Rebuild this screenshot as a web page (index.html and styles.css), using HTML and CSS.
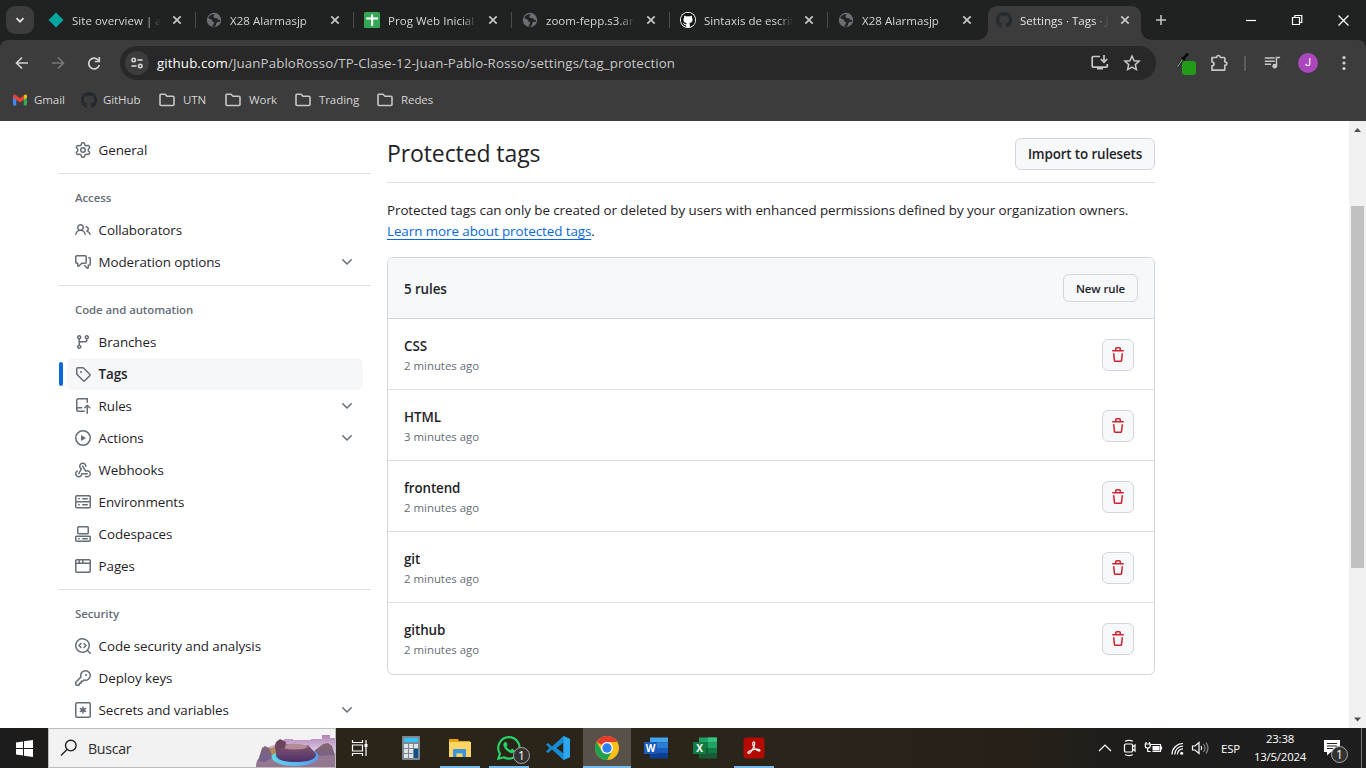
FILE: index.html
```html
<!DOCTYPE html>
<html lang="en">
<head>
<meta charset="utf-8">
<title>Settings · Tags</title>
<link rel="stylesheet" href="styles.css">
</head>
<body>
<svg class="defs" aria-hidden="true">
<symbol id="gear" viewBox="0 0 16 16"><path d="M8 0a8.2 8.2 0 0 1 .701.031C9.444.095 9.99.645 10.16 1.29l.288 1.107c.018.066.079.158.212.224.231.114.454.243.668.386.123.082.233.09.299.071l1.103-.303c.644-.176 1.392.021 1.82.63.27.385.506.792.704 1.218.315.675.111 1.422-.364 1.891l-.814.806c-.049.048-.098.147-.088.294.016.257.016.515 0 .772-.01.147.038.246.088.294l.814.806c.475.469.679 1.216.364 1.891a7.977 7.977 0 0 1-.704 1.217c-.428.61-1.176.807-1.82.63l-1.102-.302c-.067-.019-.177-.011-.3.071a5.909 5.909 0 0 1-.668.386c-.133.066-.194.158-.211.224l-.29 1.106c-.168.646-.715 1.196-1.458 1.26a8.006 8.006 0 0 1-1.402 0c-.743-.064-1.289-.614-1.458-1.26l-.289-1.106c-.018-.066-.079-.158-.212-.224a5.738 5.738 0 0 1-.668-.386c-.123-.082-.233-.09-.299-.071l-1.103.303c-.644.176-1.392-.021-1.82-.63a8.12 8.12 0 0 1-.704-1.218c-.315-.675-.111-1.422.363-1.891l.815-.806c.05-.048.098-.147.088-.294a6.214 6.214 0 0 1 0-.772c.01-.147-.038-.246-.088-.294l-.815-.806C.635 6.045.431 5.298.746 4.623a7.92 7.92 0 0 1 .704-1.217c.428-.61 1.176-.807 1.82-.63l1.102.302c.067.019.177.011.3-.071.214-.143.437-.272.668-.386.133-.066.194-.158.211-.224l.29-1.106C6.009.645 6.556.095 7.299.03 7.53.01 7.764 0 8 0Zm-.571 1.525c-.036.003-.108.036-.137.146l-.289 1.105c-.147.561-.549.967-.998 1.189-.173.086-.34.183-.5.29-.417.278-.97.423-1.529.27l-1.103-.303c-.109-.03-.175.016-.195.045-.22.312-.412.644-.573.99-.014.031-.021.11.059.19l.815.806c.411.406.562.957.53 1.456a4.709 4.709 0 0 0 0 .582c.032.499-.119 1.05-.53 1.456l-.815.806c-.081.08-.073.159-.059.19.162.346.353.677.573.989.02.03.085.076.195.046l1.102-.303c.56-.153 1.113-.008 1.53.27.161.107.328.204.501.29.447.222.85.629.997 1.189l.289 1.105c.029.109.101.143.137.146a6.6 6.6 0 0 0 1.142 0c.036-.003.108-.036.137-.146l.289-1.105c.147-.561.549-.967.998-1.189.173-.086.34-.183.5-.29.417-.278.97-.423 1.529-.27l1.103.303c.109.029.175-.016.195-.045.22-.313.411-.644.573-.99.014-.031.021-.11-.059-.19l-.815-.806c-.411-.406-.562-.957-.53-1.456a4.709 4.709 0 0 0 0-.582c-.032-.499.119-1.05.53-1.456l.815-.806c.081-.08.073-.159.059-.19a6.464 6.464 0 0 0-.573-.989c-.02-.03-.085-.076-.195-.046l-1.102.303c-.56.153-1.113.008-1.53-.27a4.44 4.44 0 0 0-.501-.29c-.447-.222-.85-.629-.997-1.189l-.289-1.105c-.029-.11-.101-.143-.137-.146a6.6 6.6 0 0 0-1.142 0ZM11 8a3 3 0 1 1-6 0 3 3 0 0 1 6 0ZM9.5 8a1.5 1.5 0 1 0-3.001.001A1.5 1.5 0 0 0 9.5 8Z"/></symbol>
<symbol id="people" viewBox="0 0 16 16"><path d="M2 5.5a3.5 3.5 0 1 1 5.898 2.549 5.508 5.508 0 0 1 3.034 4.084.75.75 0 1 1-1.482.235 4 4 0 0 0-7.9 0 .75.75 0 0 1-1.482-.236A5.507 5.507 0 0 1 3.102 8.05 3.493 3.493 0 0 1 2 5.5ZM11 4a3.001 3.001 0 0 1 2.22 5.018 5.01 5.01 0 0 1 2.56 3.012.749.749 0 0 1-.885.954.752.752 0 0 1-.549-.514 3.507 3.507 0 0 0-2.522-2.372.75.75 0 0 1-.574-.73v-.352a.75.75 0 0 1 .416-.672A1.5 1.5 0 0 0 11 5.5.75.75 0 0 1 11 4Zm-5.5-.5a2 2 0 1 0-.001 3.999A2 2 0 0 0 5.5 3.5Z"/></symbol>
<symbol id="discussion" viewBox="0 0 16 16"><path d="M1.75 1h8.5c.966 0 1.75.784 1.75 1.75v5.5A1.75 1.75 0 0 1 10.25 10H7.061l-2.574 2.573A1.458 1.458 0 0 1 2 11.543V10h-.25A1.75 1.75 0 0 1 0 8.25v-5.5C0 1.784.784 1 1.75 1ZM1.5 2.75v5.5c0 .138.112.25.25.25h1a.75.75 0 0 1 .75.75v2.19l2.72-2.72a.749.749 0 0 1 .53-.22h3.5a.25.25 0 0 0 .25-.25v-5.5a.25.25 0 0 0-.25-.25h-8.5a.25.25 0 0 0-.25.25Zm13 2a.25.25 0 0 0-.25-.25h-.5a.75.75 0 0 1 0-1.5h.5c.966 0 1.75.784 1.75 1.75v5.5A1.75 1.75 0 0 1 14.25 12H14v1.543a1.458 1.458 0 0 1-2.487 1.03L9.22 12.28a.749.749 0 0 1 .326-1.275.749.749 0 0 1 .734.215l2.22 2.22v-2.19a.75.75 0 0 1 .75-.75h1a.25.25 0 0 0 .25-.25Z"/></symbol>
<symbol id="branch" viewBox="0 0 16 16"><path d="M9.5 3.25a2.25 2.25 0 1 1 3 2.122V6A2.5 2.5 0 0 1 10 8.5H6a1 1 0 0 0-1 1v1.128a2.251 2.251 0 1 1-1.5 0V5.372a2.25 2.25 0 1 1 1.5 0v1.836A2.493 2.493 0 0 1 6 7h4a1 1 0 0 0 1-1v-.628A2.25 2.25 0 0 1 9.5 3.25Zm-6 0a.75.75 0 1 0 1.5 0 .75.75 0 0 0-1.5 0Zm8.25-.75a.75.75 0 1 0 0 1.5.75.75 0 0 0 0-1.5ZM4.25 12a.75.75 0 1 0 0 1.5.75.75 0 0 0 0-1.5Z"/></symbol>
<symbol id="tag" viewBox="0 0 16 16"><path d="M1 7.775V2.75C1 1.784 1.784 1 2.75 1h5.025c.464 0 .91.184 1.238.513l6.25 6.25a1.75 1.75 0 0 1 0 2.474l-5.026 5.026a1.75 1.75 0 0 1-2.474 0l-6.25-6.25A1.752 1.752 0 0 1 1 7.775Zm1.5 0c0 .066.026.13.073.177l6.25 6.25a.25.25 0 0 0 .354 0l5.025-5.025a.25.25 0 0 0 0-.354l-6.25-6.25a.25.25 0 0 0-.177-.073H2.75a.25.25 0 0 0-.25.25ZM6 5a1 1 0 1 1 0 2 1 1 0 0 1 0-2Z"/></symbol>
<symbol id="repopush" viewBox="0 0 16 16"><path d="M1 2.5A2.5 2.5 0 0 1 3.5 0h8.75a.75.75 0 0 1 .75.75v3.5a.75.75 0 0 1-1.5 0V1.5h-8a1 1 0 0 0-1 1v6.708A2.493 2.493 0 0 1 3.5 9h3.25a.75.75 0 0 1 0 1.5H3.5a1 1 0 0 0 0 2h5.75a.75.75 0 0 1 0 1.5H3.5A2.5 2.5 0 0 1 1 11.5Zm13.23 7.79-1.225-1.224v6.184a.75.75 0 0 1-1.5 0V9.066L10.28 10.29a.75.75 0 0 1-1.06-1.061l2.505-2.504a.75.75 0 0 1 1.06 0L15.29 9.23a.751.751 0 0 1-.018 1.042.751.751 0 0 1-1.042.018Z"/></symbol>
<symbol id="play" viewBox="0 0 16 16"><path d="M8 0a8 8 0 1 1 0 16A8 8 0 0 1 8 0ZM1.5 8a6.5 6.5 0 1 0 13 0 6.5 6.5 0 0 0-13 0Zm4.879-2.773 4.264 2.559a.25.25 0 0 1 0 .428l-4.264 2.559A.25.25 0 0 1 6 10.559V5.442a.25.25 0 0 1 .379-.215Z"/></symbol>
<symbol id="webhook" viewBox="0 0 16 16"><path d="M5.5 4.25a2.25 2.25 0 0 1 4.5 0 .75.75 0 0 0 1.5 0 3.75 3.75 0 1 0-6.14 2.889l-2.272 4.258a.75.75 0 0 0 1.324.706L7 7.25a.75.75 0 0 0-.309-1.015A2.25 2.25 0 0 1 5.5 4.25Z"/><path d="M7.364 3.607a.75.75 0 0 1 1.03.257l2.608 4.349a3.75 3.75 0 1 1-.628 6.785.75.75 0 0 1 .752-1.299 2.25 2.25 0 1 0-.033-3.88.75.75 0 0 1-1.03-.256L7.107 4.636a.75.75 0 0 1 .257-1.03Z"/><path d="M2.9 8.776A.75.75 0 0 1 2.625 9.8 2.25 2.25 0 1 0 6 11.75a.75.75 0 0 1 .75-.751h5.5a.75.75 0 0 1 0 1.5H7.425a3.751 3.751 0 1 1-5.55-3.998.75.75 0 0 1 1.024.274Z"/></symbol>
<symbol id="server" viewBox="0 0 16 16"><path d="M1.75 1h12.5c.966 0 1.75.784 1.75 1.75v4c0 .372-.116.717-.314 1 .198.283.314.628.314 1v4a1.75 1.75 0 0 1-1.75 1.75H1.75A1.75 1.75 0 0 1 0 12.75v-4c0-.358.109-.707.314-1a1.739 1.739 0 0 1-.314-1v-4C0 1.784.784 1 1.75 1ZM1.5 2.75v4c0 .138.112.25.25.25h12.5a.25.25 0 0 0 .25-.25v-4a.25.25 0 0 0-.25-.25H1.75a.25.25 0 0 0-.25.25Zm.25 5.75a.25.25 0 0 0-.25.25v4c0 .138.112.25.25.25h12.5a.25.25 0 0 0 .25-.25v-4a.25.25 0 0 0-.25-.25ZM7 4.75A.75.75 0 0 1 7.75 4h4.5a.75.75 0 0 1 0 1.5h-4.5A.75.75 0 0 1 7 4.75ZM7.75 10h4.5a.75.75 0 0 1 0 1.5h-4.5a.75.75 0 0 1 0-1.5ZM3 4.75A.75.75 0 0 1 3.75 4h.5a.75.75 0 0 1 0 1.5h-.5A.75.75 0 0 1 3 4.75ZM3.75 10h.5a.75.75 0 0 1 0 1.5h-.5a.75.75 0 0 1 0-1.5Z"/></symbol>
<symbol id="codespaces" viewBox="0 0 16 16"><path d="M0 11.25c0-.966.784-1.75 1.75-1.75h12.5c.966 0 1.75.784 1.75 1.75v3A1.75 1.75 0 0 1 14.25 16H1.75A1.75 1.75 0 0 1 0 14.25Zm2-9.5C2 .784 2.784 0 3.75 0h8.5C13.216 0 14 .784 14 1.75v5a1.75 1.75 0 0 1-1.75 1.75h-8.5A1.75 1.75 0 0 1 2 6.75Zm1.75-.25a.25.25 0 0 0-.25.25v5c0 .138.112.25.25.25h8.5a.25.25 0 0 0 .25-.25v-5a.25.25 0 0 0-.25-.25Zm-2 9.5a.25.25 0 0 0-.25.25v3c0 .138.112.25.25.25h12.5a.25.25 0 0 0 .25-.25v-3a.25.25 0 0 0-.25-.25Z"/><path d="M7 12.75a.75.75 0 0 1 .75-.75h4.5a.75.75 0 0 1 0 1.5h-4.5a.75.75 0 0 1-.75-.75Zm-4 0a.75.75 0 0 1 .75-.75h.5a.75.75 0 0 1 0 1.5h-.5a.75.75 0 0 1-.75-.75Z"/></symbol>
<symbol id="browser" viewBox="0 0 16 16"><path d="M0 2.75C0 1.784.784 1 1.75 1h12.5c.966 0 1.75.784 1.75 1.75v10.5A1.75 1.75 0 0 1 14.25 15H1.75A1.75 1.75 0 0 1 0 13.25ZM14.5 6h-13v7.25c0 .138.112.25.25.25h12.5a.25.25 0 0 0 .25-.25Zm-6-3.5v2h6V2.75a.25.25 0 0 0-.25-.25ZM5 2.5v2h2v-2Zm-3.25 0a.25.25 0 0 0-.25.25V4.5h2v-2Z"/></symbol>
<symbol id="codescan" viewBox="0 0 16 16"><path d="M8.47 4.97a.75.75 0 0 0 0 1.06L9.94 7.5 8.47 8.97a.75.75 0 1 0 1.06 1.06l2-2a.75.75 0 0 0 0-1.06l-2-2a.75.75 0 0 0-1.06 0ZM6.53 6.03a.75.75 0 0 0-1.06-1.06l-2 2a.75.75 0 0 0 0 1.06l2 2a.75.75 0 1 0 1.06-1.06L5.06 7.5l1.47-1.47Z"/><path d="M12.246 13.307a7.5 7.5 0 1 1 1.06-1.06l2.474 2.473a.75.75 0 1 1-1.06 1.06l-2.474-2.473ZM1.5 7.5a6.002 6.002 0 0 0 3.608 5.504 6.002 6.002 0 0 0 6.486-1.117.748.748 0 0 1 .292-.293A6 6 0 1 0 1.5 7.5Z"/></symbol>
<symbol id="key" viewBox="0 0 16 16"><path d="M10.5 0a5.499 5.499 0 1 1-1.288 10.848l-.932.932a.749.749 0 0 1-.53.22H7v.75a.749.749 0 0 1-.22.53l-.5.5a.749.749 0 0 1-.53.22H5v.75a.749.749 0 0 1-.22.53l-.5.5a.749.749 0 0 1-.53.22h-2A1.75 1.75 0 0 1 0 14.25v-2c0-.199.079-.389.22-.53l4.932-4.932A5.5 5.5 0 0 1 10.5 0Zm-4 5.5c-.001.431.069.86.205 1.269a.75.75 0 0 1-.181.768L1.5 12.56v1.69c0 .138.112.25.25.25h1.69l.06-.06v-1.19a.75.75 0 0 1 .75-.75h1.19l.06-.06v-1.19a.75.75 0 0 1 .75-.75h1.19l1.023-1.025a.75.75 0 0 1 .768-.18A4 4 0 1 0 6.5 5.5ZM11 6a1 1 0 1 1 0-2 1 1 0 0 1 0 2Z"/></symbol>
<symbol id="secret" viewBox="0 0 16 16"><g fill="none" stroke="currentColor" stroke-width="1.5" stroke-linecap="round"><rect x=".75" y=".75" width="14.5" height="14.5" rx="1.2"/><path d="M8 5v6M5.4 6.5l5.2 3M5.4 9.5l5.2-3"/></g></symbol>
<symbol id="trash" viewBox="0 0 16 16"><path d="M11 1.75V3h2.25a.75.75 0 0 1 0 1.5H2.75a.75.75 0 0 1 0-1.5H5V1.75C5 .784 5.784 0 6.75 0h2.5C10.216 0 11 .784 11 1.75ZM4.496 6.675l.66 6.6a.25.25 0 0 0 .249.225h5.19a.25.25 0 0 0 .249-.225l.66-6.6a.75.75 0 0 1 1.492.149l-.66 6.6A1.748 1.748 0 0 1 10.595 15h-5.19a1.75 1.75 0 0 1-1.741-1.575l-.66-6.6a.75.75 0 1 1 1.492-.15ZM6.5 1.75V3h3V1.75a.25.25 0 0 0-.25-.25h-2.5a.25.25 0 0 0-.25.25Z"/></symbol>
<symbol id="chevron" viewBox="0 0 16 16"><path d="M12.78 5.22a.749.749 0 0 1 0 1.06l-4.25 4.25a.749.749 0 0 1-1.06 0L3.22 6.28a.749.749 0 1 1 1.06-1.06L8 8.939l3.72-3.719a.749.749 0 0 1 1.06 0Z"/></symbol>
<symbol id="octocat" viewBox="0 0 16 16"><path d="M8 0C3.58 0 0 3.58 0 8c0 3.54 2.29 6.53 5.47 7.59.4.07.55-.17.55-.38 0-.19-.01-.82-.01-1.49-2.01.37-2.53-.49-2.69-.94-.09-.23-.48-.94-.82-1.13-.28-.15-.68-.52-.01-.53.63-.01 1.08.58 1.23.82.72 1.21 1.87.87 2.33.66.07-.52.28-.87.51-1.07-1.78-.2-3.64-.89-3.64-3.95 0-.87.31-1.59.82-2.15-.08-.2-.36-1.02.08-2.12 0 0 .67-.21 2.2.82.64-.18 1.32-.27 2-.27s1.36.09 2 .27c1.53-1.04 2.2-.82 2.2-.82.44 1.1.16 1.92.08 2.12.51.56.82 1.27.82 2.15 0 3.07-1.87 3.75-3.65 3.95.29.25.54.73.54 1.48 0 1.07-.01 1.93-.01 2.2 0 .21.15.46.55.38A8.01 8.01 0 0 0 16 8c0-4.42-3.58-8-8-8Z"/></symbol>
<symbol id="close" viewBox="0 0 16 16"><path d="M4.3 4.3l7.4 7.4M11.7 4.3l-7.4 7.4" stroke="currentColor" stroke-width="1.7"/></symbol>
<symbol id="globe" viewBox="0 0 16 16"><circle cx="8" cy="8" r="7.2" fill="#6c7076"/><path d="M8.600 2.300 7.200 4.600l1.200 1.300 2.600.3 1 1.500 2 .3-.4 2-2.200-.3-1.200 1.800-.6 2.600-1.800.8-1.200-.4.200-2.200-1.300-1.100.2-1.600L3 8.200l-.9-1 .8-2.600Q5.500 1.800 8.600 2.300Z" fill="#212423"/><path d="M1.300 6.600c2-.2 3.900.2 4.700 1.600l.4 1.400 1.700.6-.4 2-1.800.8-.8-1.600-2.600-.6Q1.300 8.700 1.300 6.600Z" fill="#6c7076"/></symbol>
<symbol id="folder" viewBox="0 0 18 16"><path d="M2 3.2q0-1 1-1h4l2 2h6q1 0 1 1v7.3q0 1-1 1H3q-1 0-1-1Z" fill="none" stroke="#c7c7c7" stroke-width="1.6"/></symbol>
</svg>

<header class="browser">
  <div class="tabstrip">
    <div class="tabsearch"><svg width="12" height="12" viewBox="0 0 12 12"><path d="M2.5 4.2 6 7.7l3.500-3.500" fill="none" stroke="#e3e3e3" stroke-width="1.800"/></svg></div>
    <div class="tab"><svg class="fav" viewBox="0 0 16 16"><path d="M8 .5 15.500 8 8 15.500.5 8Z" fill="#05a5a0"/></svg><span class="tt">Site overview | aed</span><svg class="x"><use href="#close"/></svg></div>
    <div class="tab"><svg class="fav"><use href="#globe"/></svg><span class="tt">X28 Alarmasjp</span><svg class="x"><use href="#close"/></svg></div>
    <div class="tab"><svg class="fav" viewBox="0 0 16 16"><rect width="16" height="16" rx="1.500" fill="#34a853"/><path d="M7 2.500h2.200v3H14v2H9.200v6.300H7V7.500H2.200v-2H7Z" fill="#fff"/></svg><span class="tt">Prog Web Inicial</span><svg class="x"><use href="#close"/></svg></div>
    <div class="tab"><svg class="fav"><use href="#globe"/></svg><span class="tt">zoom-fepp.s3.ama</span><svg class="x"><use href="#close"/></svg></div>
    <div class="tab"><svg class="fav" viewBox="0 0 16 16"><circle cx="8" cy="8" r="8" fill="#fff"/><svg class="ink" x=".8" y=".8" width="14.400" height="14.400"><use href="#octocat"/></svg></svg><span class="tt">Sintaxis de escritu</span><svg class="x"><use href="#close"/></svg></div>
    <div class="tab nodiv"><svg class="fav"><use href="#globe"/></svg><span class="tt">X28 Alarmasjp</span><svg class="x"><use href="#close"/></svg></div>
    <div class="tab active"><svg class="fav oct"><use href="#octocat"/></svg><span class="tt">Settings · Tags · Ju</span><svg class="x"><use href="#close"/></svg></div>
    <svg class="plus" viewBox="0 0 12 12"><path d="M6 1v10M1 6h10" stroke="#c7c7c7" stroke-width="1.500"/></svg>
    <svg class="wins" viewBox="0 0 110 20"><g fill="none" stroke="#fff" stroke-width="1.200"><path d="M3 10.500h10"/><path d="M49.500 7.500h7v7h-7ZM51.800 7.500v-2h7v7h-2"/><path d="m95.500 5.500 10 10M105.500 5.500l-10 10"/></g></svg>
  </div>
  <div class="toolbar">
    <svg class="navs" viewBox="0 0 100 20"><g fill="none" stroke="#d0d0d0" stroke-width="1.700"><path d="M18 10H7M12 4.500 6.500 10l5.500 5.500"/><path stroke="#777" d="M42 10h11M48 4.500 53.500 10 48 15.500"/><path d="M88.400 7.200A5.400 5.400 0 1 0 89.300 12M89.300 4v4.500h-4.500"/></g></svg>
    <div class="omnibox">
      <span class="site"><svg width="14" height="14" viewBox="0 0 14 14"><g fill="none" stroke="#d5d5d5" stroke-width="1.600"><circle cx="3.700" cy="4" r="1.700"/><path d="M7.500 4h5"/><circle cx="10.300" cy="10" r="1.700"/><path d="M1.500 10h5"/></g></svg></span>
      <span class="url"><b>github.com</b>/JuanPabloRosso/TP-Clase-12-Juan-Pablo-Rosso/settings/tag_protection</span>
      <svg class="install" viewBox="0 0 20 20"><g fill="none" stroke="#c7c7c7" stroke-width="1.700"><path d="M10 3.500H3q-.8 0-.8.800v9q0 .8.800.8h13.500q.8 0 .8-.8v-2.300"/><path d="M14 2v7M10.800 6l3.200 3.200L17.200 6"/></g><path d="M7 14h6v2.500H7Z" fill="#c7c7c7"/></svg>
      <svg class="star" viewBox="0 0 20 20"><path d="m10 3 2.100 4.700 5 .5-3.800 3.400 1.100 5L10 14l-4.400 2.600 1.100-5L2.900 8.200l5-.5Z" fill="none" stroke="#c7c7c7" stroke-width="1.500"/></svg>
    </div>
    <svg class="ext" viewBox="0 0 26 28"><path d="m4.500 18.500 5-7.500" stroke="#222" stroke-width="2.400"/><path d="m4.500 18 5-7.500" stroke="#8db59a" stroke-width="1"/><path d="m8 8.500 3-1 1.500-2.500 3-1.200-.2 3-2.600 1.700-1 3.200-1.700-.8Z" fill="#080808"/><rect x="9" y="12" width="14" height="14" rx="3" fill="#229b16"/></svg>
    <svg class="puzzle" viewBox="0 0 20 20"><path d="M3 4.500h4.500q.3-2 2-2t2 2H15q.8 0 .8.800v3.500q2 .200 2 1.800t-2 1.800v4q0 .800-.800.800H3v-4.300q2-.200 2-2T3 9Z" fill="none" stroke="#c7c7c7" stroke-width="1.700" stroke-linejoin="round"/></svg>
    <i class="sep"></i>
    <svg class="music" viewBox="0 0 20 20"><path d="M2 4.500h11M2 8h11M2 11.500h7M15 13.500V4h4" fill="none" stroke="#c7c7c7" stroke-width="1.700"/><circle cx="13" cy="13.500" r="2.600" fill="#c7c7c7"/></svg>
    <span class="avatar">J</span>
    <svg class="dots" viewBox="0 0 4 16"><g fill="#d0d0d0"><circle cx="2" cy="2.500" r="1.600"/><circle cx="2" cy="8" r="1.600"/><circle cx="2" cy="13.500" r="1.600"/></g></svg>
  </div>
  <div class="bookmarks">
    <span class="bm gm"><svg width="14" height="12" viewBox="0 0 14 12"><path d="M0 2.500v8q0 .9.900.9h2.400V5Z" fill="#4285f4"/><path d="M14 2.500v8q0 .9-.9.9h-2.400V5Z" fill="#34a853"/><path d="M10.700 1.500v4.200L14 3.200V2q-.4-2-2.200-1.300Z" fill="#fbbc04"/><path d="M0 3.200V2Q.4 0 2.200.7L7 4.300 10.700 1.500v4.200L7 8.400 3.300 5.700Z" fill="#ea4335"/></svg>Gmail</span>
    <span class="bm gh"><svg class="oct" width="16" height="16"><use href="#octocat"/></svg>GitHub</span>
    <span class="bm f1"><svg width="18" height="16"><use href="#folder"/></svg>UTN</span>
    <span class="bm f2"><svg width="18" height="16"><use href="#folder"/></svg>Work</span>
    <span class="bm f3"><svg width="18" height="16"><use href="#folder"/></svg>Trading</span>
    <span class="bm f4"><svg width="18" height="16"><use href="#folder"/></svg>Redes</span>
  </div>
</header>

<div class="viewport">
  <nav class="side">
    <a class="item"><svg><use href="#gear"/></svg>General</a>
    <hr>
    <h3>Access</h3>
    <a class="item"><svg><use href="#people"/></svg>Collaborators</a>
    <a class="item"><svg><use href="#discussion"/></svg>Moderation options<svg class="chev"><use href="#chevron"/></svg></a>
    <hr>
    <h3>Code and automation</h3>
    <a class="item"><svg><use href="#branch"/></svg>Branches</a>
    <a class="item current"><svg><use href="#tag"/></svg>Tags</a>
    <a class="item"><svg><use href="#repopush"/></svg>Rules<svg class="chev"><use href="#chevron"/></svg></a>
    <a class="item"><svg><use href="#play"/></svg>Actions<svg class="chev"><use href="#chevron"/></svg></a>
    <a class="item"><svg><use href="#webhook"/></svg>Webhooks</a>
    <a class="item"><svg><use href="#server"/></svg>Environments</a>
    <a class="item"><svg><use href="#codespaces"/></svg>Codespaces</a>
    <a class="item"><svg><use href="#browser"/></svg>Pages</a>
    <hr>
    <h3>Security</h3>
    <a class="item"><svg><use href="#codescan"/></svg>Code security and analysis</a>
    <a class="item"><svg><use href="#key"/></svg>Deploy keys</a>
    <a class="item"><svg><use href="#secret"/></svg>Secrets and variables<svg class="chev"><use href="#chevron"/></svg></a>
  </nav>
  <main class="main">
    <div class="head"><h1>Protected tags</h1><button class="btn">Import to rulesets</button></div>
    <p class="desc">Protected tags can only be created or deleted by users with enhanced permissions defined by your organization owners.<br><a class="link">Learn more about protected tags</a>.</p>
    <section class="box">
      <div class="boxhead"><strong>5 rules</strong><button class="btn sm">New rule</button></div>
      <div class="row"><div><strong>CSS</strong><small>2 minutes ago</small></div><button class="del"><svg><use href="#trash"/></svg></button></div>
      <div class="row"><div><strong>HTML</strong><small>3 minutes ago</small></div><button class="del"><svg><use href="#trash"/></svg></button></div>
      <div class="row"><div><strong>frontend</strong><small>2 minutes ago</small></div><button class="del"><svg><use href="#trash"/></svg></button></div>
      <div class="row"><div><strong>git</strong><small>2 minutes ago</small></div><button class="del"><svg><use href="#trash"/></svg></button></div>
      <div class="row"><div><strong>github</strong><small>2 minutes ago</small></div><button class="del"><svg><use href="#trash"/></svg></button></div>
    </section>
  </main>
  <div class="scroll"><svg viewBox="0 0 17 17"><path d="M5 11h7L8.500 7Z" fill="#505050"/></svg><i></i><svg viewBox="0 0 17 17"><path d="M5 6.500h7l-3.500 4Z" fill="#505050"/></svg></div>
</div>

<footer class="taskbar">
  <div class="start"><svg width="17" height="17" viewBox="0 0 17 17"><path d="M0 2.400 7 1.400v6.700H0ZM8 1.300 17 0v8.100H8ZM0 9h7v6.600l-7-1ZM8 9h9v8l-9-1.300Z" fill="#fff"/></svg></div>
  <div class="search">
    <svg class="mag" viewBox="0 0 18 18"><circle cx="10.800" cy="6.600" r="5.300" fill="none" stroke="#222" stroke-width="1.400"/><path d="m7 10.400-6 6" stroke="#222" stroke-width="1.400"/></svg>
    <span>Buscar</span>
    <svg class="art" viewBox="0 0 79 32">
      <defs><linearGradient id="ga" x1="0" y1="0" x2="0" y2="1"><stop offset="0" stop-color="#b083b2"/><stop offset=".5" stop-color="#dccbea"/><stop offset="1" stop-color="#b79bd0"/></linearGradient><linearGradient id="gb" x1="0" y1="0" x2="0" y2="1"><stop offset="0" stop-color="#86596c"/><stop offset="1" stop-color="#4c2f6b"/></linearGradient><linearGradient id="gc"><stop offset="0" stop-color="#5fd7ee"/><stop offset="1" stop-color="#5a9cf0"/></linearGradient><linearGradient id="gd" x1="0" y1="0" x2="0" y2="1"><stop offset="0" stop-color="#8a6669"/><stop offset="1" stop-color="#6d6296"/></linearGradient></defs>
      <path d="M12 12 20 9l9-5h8v1h18V4h11V0h8v3h5v29H12Z" fill="url(#ga)"/>
      <path d="M0 32q0-8 4-9l34-5 26-1 15 3v12Z" fill="#957890"/>
      <path d="M2 26 6 13l3-2 10 5 1 5-12 6ZM58 16l9-7 5-1 4 3 3 9-17 1Z" fill="url(#gd)"/>
      <ellipse cx="39" cy="21.500" rx="23.500" ry="9.500" fill="url(#gc)"/>
      <path d="M24 11 31 9q12 4 21 1l8 9q0 8-21 8-18 0-19-7Z" fill="url(#gb)"/>
      <path d="M26 11q12-5 26 0-1 3.500-13 3.500T26 11Z" fill="#b78a98"/>
      <path d="m18 14 2-7 4-3 6 3-1 6-5 1-3 5-2-1Z" fill="#6b4560"/><path d="m13 13 6-1 1 6-4 2Z" fill="#b58a60"/>
    </svg>
  </div>
  <div class="task"><svg width="18" height="18" viewBox="0 0 18 18"><g fill="none" stroke="#fff" stroke-width="1.200"><path d="M1.500 1v2.500h10V1M1.500 17v-2.500h10V17M1.500 6h10v6h-10ZM15 1v16"/></g><path d="M13.500 5h3v3h-3Z" fill="#fff"/></svg></div>
  <div class="apps">
    <div class="app"><svg viewBox="0 0 24 24"><rect x="3" width="18" height="24" rx="1" fill="#7b8791"/><rect x="5" y="2" width="14" height="4" fill="#35c1f1"/><g fill="#dfe3e6"><path d="M5 8h4v4H5zM10 8h4v4h-4zM15 8h4v4h-4zM5 13h4v4H5zM10 13h4v4h-4zM5 18h4v4H5zM10 18h4v4h-4z"/></g><path d="M15 13h4v9h-4z" fill="#0f4f8c"/></svg></div>
    <div class="app run"><svg viewBox="0 0 24 24"><path d="M1 3h9l1 2h11v16H1Z" fill="#e8a20c"/><path d="M1 6h22v15H1Z" fill="#ffd666"/><path d="M5 21v-7q0-1 1-1h11q1 0 1 1v7h-3.500v-3.500h-6V21Z" fill="#3c95dc"/></svg></div>
    <div class="app run"><svg viewBox="0 0 24 24"><path d="M12 1.200A10.700 10.700 0 0 0 2.900 17.500L1.400 22.700l5.400-1.400A10.700 10.700 0 1 0 12 1.200Z" fill="none" stroke="#25d366" stroke-width="2.200"/><path d="M8 6q-2 1-1.500 3.500 1.500 5 7 7.500 3 .8 4-1.700l.2-1L15 12.500l-1.400 1.700q-3-1.200-4.200-3.700L10.500 9 9.300 6Z" fill="#25d366"/></svg><em class="badge">1</em></div>
    <div class="app"><svg viewBox="0 0 24 24"><path d="M17.500 0 24 3v18l-6.500 3L6 13.500 2 17l-2-1.500L3.500 12 0 8.500 2 7l4 3.500Zm0 6.500L10.500 12l7 5.500Z" fill="#168bd2" fill-rule="evenodd"/><path d="M17.500 0 24 3v18l-6.500 3Z" fill="#2ba7f0"/></svg></div>
    <div class="app run on"><svg viewBox="0 0 24 24"><circle cx="12" cy="12" r="12" fill="#fbc116"/><path d="M12 12 1.600 6A12 12 0 0 1 22.400 6H12Z" fill="#e33b2e"/><path d="M1.600 6A12 12 0 0 0 12 24l5.200-9L12 12 6.800 15Z" fill="#1fa14f"/><circle cx="12" cy="12" r="6" fill="#fff"/><circle cx="12" cy="12" r="4.700" fill="#2d7ff0"/></svg></div>
    <div class="app"><svg viewBox="0 0 24 24"><path d="M6 1.500h18v5H6Z" fill="#41a5ee"/><path d="M6 6.500h18V12H6Z" fill="#2b7cd3"/><path d="M6 12h18v5H6Z" fill="#185abd"/><path d="M6 17h18v5.500H6Z" fill="#103f91"/><path d="M0 6h13v12H0Z" fill="#185abd"/><text x="6.500" y="15.500" class="let">W</text></svg></div>
    <div class="app"><svg viewBox="0 0 24 24"><path d="M6 1.500h18v5H6Z" fill="#21a366"/><path d="M15 1.500h9v5h-9Z" fill="#33c481"/><path d="M6 6.500h18V12H6Z" fill="#107c41"/><path d="M15 6.500h9V12h-9Z" fill="#21a366"/><path d="M6 12h18v10.500H6Z" fill="#185c37"/><path d="M15 12h9v5h-9Z" fill="#107c41"/><path d="M0 6h13v12H0Z" fill="#107c41"/><text x="6.500" y="15.500" class="let">X</text></svg></div>
    <div class="app run"><svg viewBox="0 0 24 24"><rect x="1.500" y="1.500" width="21" height="21" rx="3.500" fill="#b30b00"/><path d="M11.500 6c1.500-.5 1.500 2 .3 4.700-1.500 3.500-4 7-5.500 6.500s.500-2.500 5-3.500 6.700-.3 6.700.800-3.500 0-5.500-2.500S10 6.500 11.500 6Z" fill="none" stroke="#fff" stroke-width="1.200"/></svg></div>
  </div>
  <div class="tray">
    <svg class="icons" viewBox="0 0 120 20"><g fill="none" stroke="#fff" stroke-width="1.200"><path d="m4 13 6-6 6 6"/><rect x="29.500" y="6" width="8" height="8" rx="1"/><path d="m37.500 9 2.500-2v6l-2.500-2M30 3.200q4-1.500 8 0M30 16.800q4 1.500 8 0"/><path d="M55.500 6.500h10v7h-8M66.500 8.500v3" /><path d="M51 4v2M54.500 4v2M50.300 6h4.900v2q0 2-2.500 2-2.400 0-2.400-2ZM52.700 10v3.500h3"/><path d="M77 16.500A11 11 0 0 1 88 5.500M79.700 16.500A8.300 8.300 0 0 1 88 8.200M82.400 16.500a5.600 5.600 0 0 1 5.600-5.600"/><path d="M97.500 8H100l4-3.500v11L100 12h-2.500ZM106 8q1.500 2 0 4"/><path stroke="#888" d="M108.500 6q3 4 0 8M111 4.500q4 5.500 0 11"/></g><path d="M57.500 8h7v4.500h-7Z" fill="#fff"/><circle cx="86.700" cy="15.200" r="1.500" fill="#fff"/></svg>
    <span class="lang">ESP</span>
    <span class="clock">23:38<br>13/5/2024</span>
    <span class="notif"><svg viewBox="0 0 18 18"><path d="M1 1h16v12h-9l-4 3.500V13H1Z" fill="#fff"/><path d="M4 4.500h10M4 7h10M4 9.500h6" stroke="#222" stroke-width="1.100"/></svg><em class="badge">1</em></span>
    <i class="peek"></i>
  </div>
</footer>
</body>
</html>
```
FILE: styles.css
```css
* { box-sizing: border-box; }
body { margin: 0; width: 1366px; height: 768px; overflow: hidden; display: flex; flex-direction: column; font-family: "Open Sans", "Noto Sans", sans-serif; color: #1f2328; background: #fff; }
svg { flex: none; fill: currentColor; display: block; }
.defs { display: none; }
button { font-family: inherit; color: inherit; }

/* browser chrome */
.browser { flex: 0 0 121px; background: #1f2221; color: #d5d5d5; }
.tabstrip { height: 40px; display: flex; align-items: flex-start; padding-left: 6px; }
.tabsearch { width: 28px; height: 28px; margin: 6px 6px 0 0; border-radius: 9px; background: #3c3c3c; display: grid; place-items: center; flex: none; }
.tab { width: 158px; height: 40px; flex: none; display: flex; align-items: center; padding-left: 8px; position: relative; }
.tab::after { content: ""; position: absolute; right: 2px; top: 12px; width: 1.500px; height: 16px; background: #4a4c4b; }
.tab.nodiv::after, .tab.active::after { display: none; }
.fav { width: 16px; height: 16px; }
.ink { color: #101418; }
.tt { width: 91px; height: 18px; margin: 1px 0 0 8px; overflow: hidden; white-space: nowrap; font-size: 11.500px; line-height: 18px; letter-spacing: .03px; -webkit-mask-image: linear-gradient(90deg, #000 74px, transparent 89px); mask-image: linear-gradient(90deg, #000 74px, transparent 89px); }
.x { width: 16px; height: 16px; margin-left: 6px; color: #c7c7c7; }
.oct { color: #24292f; }
.tab.active { height: 34px; margin-top: 6px; width: 153px; padding: 0 0 6px 8px; background: #3c3c3c; border-radius: 9px 9px 0 0; color: #e3e3e3; }
.tab.active::before { content: ""; position: absolute; left: -10px; right: -10px; bottom: 0; height: 10px; background: radial-gradient(circle at 0 0, transparent 9.500px, #3c3c3c 10px) 0 0 / 10px 10px no-repeat, radial-gradient(circle at 100% 0, transparent 9.500px, #3c3c3c 10px) 100% 0 / 10px 10px no-repeat; }
.plus { width: 12px; height: 12px; margin: 14px 0 0 14px; }
.wins { width: 110px; height: 20px; margin: 10px 13px 0 auto; }
.toolbar { height: 46px; background: #3c3c3c; border-radius: 8px 8px 0 0; display: flex; align-items: center; padding-left: 10px; }
.navs { width: 100px; height: 20px; }
.omnibox { width: 1036px; height: 34px; margin-left: 10px; border-radius: 17px; background: #282828; display: flex; align-items: center; padding-left: 5px; }
.site { width: 24px; height: 24px; border-radius: 50%; background: #3c3c3c; display: grid; place-items: center; }
.url { margin-left: 8px; font-size: 13.300px; letter-spacing: .1px; color: #c7c7c7; white-space: nowrap; flex: 1; }
.url b { font-weight: 400; color: #fff; }
.install { width: 20px; height: 20px; }
.star { width: 20px; height: 20px; margin: 0 14px 0 12px; }
.ext { width: 26px; height: 28px; margin-left: 17px; }
.puzzle { width: 20px; height: 20px; margin-left: 10px; }
.sep { width: 2px; height: 15px; background: #5c5c5c; margin-left: 15px; }
.music { width: 18px; height: 18px; margin-left: 17px; }
.avatar { width: 20px; height: 20px; margin-left: 17px; border-radius: 50%; background: #ab47bc; color: #fff; font: 11px/20px Roboto, sans-serif; text-align: center; }
.dots { width: 4px; height: 16px; margin-left: 24px; }
.bookmarks { height: 35px; background: #3c3c3c; display: flex; align-items: flex-start; padding: 3px 0 0 13px; }
.bm { height: 20px; display: flex; align-items: center; gap: 7px; font-size: 11.500px; letter-spacing: -.08px; white-space: nowrap; }
.bm svg { margin-top: 1px; }
.gm { width: 68px; } .gh { width: 77px; gap: 6px; } .f1 { width: 66px; } .f2 { width: 70px; } .f3 { width: 82px; }

/* page */
.viewport { flex: 1; min-height: 0; overflow: hidden; display: flex; background: #fff; }
.side { width: 312px; margin-left: 59px; padding-top: 13px; flex: none; }
.item { height: 32px; margin: 0 8px; padding-left: 8px; display: flex; align-items: center; gap: 7.600px; font-size: 13.400px; letter-spacing: -.09px; white-space: nowrap; position: relative; border-radius: 6px; }
.item svg { width: 16px; height: 16px; color: #656d76; }
.item .chev { margin: 0 8px 0 auto; }
.current { background: #f6f7f9; font-weight: 600; }
.current::before { content: ""; position: absolute; left: -8px; top: 4px; width: 4px; height: 24px; border-radius: 6px; background: #0969da; }
.side hr { height: 1px; border: 0; margin: 7px 0 8px; background: #dcdfe3; }
.side h3 { margin: 0; height: 32px; padding-left: 16px; font-size: 11.400px; letter-spacing: -.06px; line-height: 32px; font-weight: 600; color: #656d76; }
.main { width: 768px; margin-left: 16px; padding-top: 17px; flex: none; }
.head { height: 45px; border-bottom: 1px solid #d8dee4; display: flex; justify-content: space-between; }
.head h1 { margin: 0; font-size: 23px; letter-spacing: -.1px; line-height: 30px; font-weight: 400; white-space: nowrap; }
.btn { height: 32px; width: 140px; padding: 0; border: 1px solid #d1d6dc; border-radius: 6px; background: #f6f8fa; font-size: 13.400px; letter-spacing: -.14px; font-weight: 600; white-space: nowrap; }
.btn.sm { width: 75px; height: 28px; font-size: 11.400px; letter-spacing: -.06px; }
.desc { margin: 17px 0 15px; font-size: 13.400px; letter-spacing: -.07px; line-height: 21px; white-space: nowrap; }
.link { color: #0969da; text-decoration: underline; text-underline-offset: 3px; text-decoration-thickness: 1px; }
.box { border: 1px solid #d0d7de; border-radius: 6px; overflow: hidden; }
.boxhead { height: 61px; padding: 0 16px; background: #f6f8fa; border-bottom: 1px solid #d0d7de; display: flex; align-items: center; justify-content: space-between; }
.box strong { font-size: 13.400px; letter-spacing: -.1px; font-weight: 600; line-height: 21px; display: block; }
.boxhead strong { padding-top: 2px; }
.row { height: 71px; padding: 2px 20px 0 16px; display: flex; align-items: center; justify-content: space-between; border-bottom: 1px solid #d8dee4; }
.row:last-child { border: 0; padding-top: 1px; }
.row small { display: block; font-size: 11.400px; line-height: 18px; color: #656d76; }
.del { width: 32px; height: 32px; padding: 0; border: 1px solid #d1d6dc; border-radius: 6px; background: #f6f8fa; color: #cf222e; display: grid; place-items: center; }
.del svg { width: 16px; height: 16px; }
.scroll { width: 17px; margin-left: auto; background: #f1f1f1; display: flex; flex-direction: column; align-items: center; }
.scroll svg { width: 17px; height: 17px; }
.scroll i { width: 13px; height: 362px; margin: 68px 0 auto; background: #c1c1c1; }

/* taskbar */
.taskbar { flex: 0 0 40px; display: flex; color: #fff; background: linear-gradient(90deg, #1c1c1c 0, #1d1c1a 3%, #2b2419 25%, #2b241a 58%, #262018 75%, #1e1d1c 82%, #1e1e1e 100%); }
.start { width: 48px; display: grid; place-items: center; }
.search { width: 288px; background: #f2f2f2; border: 1px solid #bcbcbc; color: #2b2b2b; display: flex; align-items: center; overflow: hidden; }
.mag { width: 18px; height: 18px; margin-left: 11px; }
.search span { margin-left: 10px; font-size: 14.200px; letter-spacing: -.3px; }
.art { width: 79px; height: 32px; margin-left: auto; align-self: flex-end; }
.task { width: 51px; padding-right: 3px; display: grid; place-items: center; }
.apps { display: flex; gap: 1px; }
.app { width: 48px; height: 40px; display: grid; place-items: center; position: relative; }
.app > svg { width: 24px; height: 24px; }
.run::after { content: ""; position: absolute; left: 4px; right: 4px; bottom: 0; height: 2px; background: #76b9ed; }
.on { background: #57514a; }
.on::after { left: 0; right: 0; }
.let { font: bold 10px "Open Sans", sans-serif; fill: #fff; text-anchor: middle; }
.badge { position: absolute; left: 28px; top: 19px; width: 17px; height: 17px; border: 1px solid #aaa; border-radius: 50%; background: #35332f; color: #fff; font: normal 12px/15px "Open Sans", sans-serif; text-align: center; }
.tray { margin-left: auto; display: flex; align-items: center; position: relative; }
.icons { width: 120px; height: 20px; }
.lang { width: 26px; margin-left: 6px; font-size: 11.400px; letter-spacing: -.2px; }
.clock { width: 66px; font-size: 11.400px; line-height: 18px; letter-spacing: -.2px; text-align: center; }
.notif { width: 48px; height: 40px; position: relative; }
.notif svg { width: 18px; height: 18px; margin: 11px 0 0 10px; }
.notif .badge { left: 18px; top: 18px; }
.peek { width: 1px; height: 40px; background: #777; margin-right: 4px; }
```
